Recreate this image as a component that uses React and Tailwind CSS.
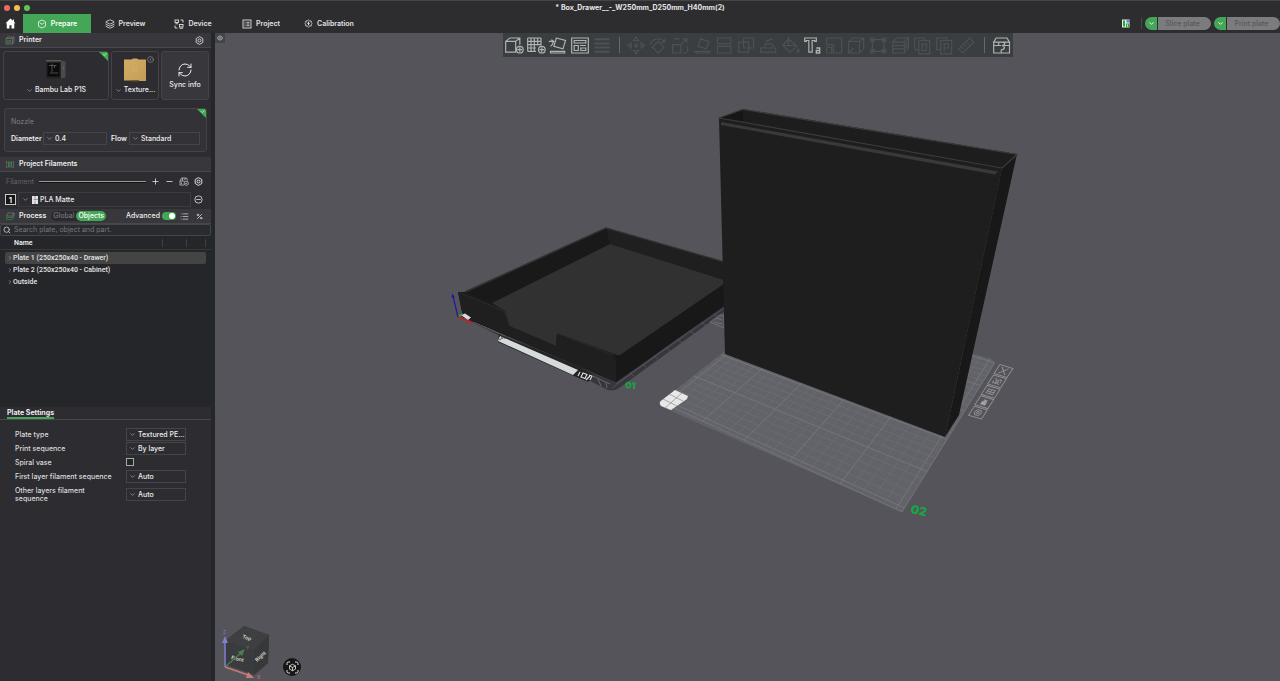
import React, { useState } from 'react';
import {
  ChevronDown,
  ChevronRight,
  Info,
  Layers,
  List,
  Minus,
  Percent,
  Plus,
  RefreshCw,
  Search,
} from 'lucide-react';

const TABS = ['Prepare', 'Preview', 'Device', 'Project', 'Calibration'];

const OBJECTS = [
  'Plate 1 (250x250x40 - Drawer)',
  'Plate 2 (250x250x40 - Cabinet)',
  'Outside',
];

/* ---------- small icons ---------- */

function HexNut({ size = 9 }) {
  return (
    <svg width={size} height={size} viewBox="0 0 18 18" fill="none" stroke="currentColor" strokeWidth="1.8">
      <path d="M9 1.2 15.6 5v8L9 16.8 2.4 13V5z" strokeLinejoin="round" />
      <circle cx="9" cy="9" r="3" />
    </svg>
  );
}

function TabIcon({ name }) {
  if (name === 'Prepare') {
    return (
      <svg width="10" height="10" viewBox="0 0 20 20" fill="none" stroke="currentColor" strokeWidth="1.5">
        <path d="M10 2 17 5.5v9L10 18l-7-3.500v-9z" strokeLinejoin="round" />
        <path d="M5.500 8 10 10.500 14.500 8" />
      </svg>
    );
  }
  if (name === 'Preview') return <Layers size={10} />;
  if (name === 'Device') {
    return (
      <svg width="10" height="10" viewBox="0 0 20 20" fill="none" stroke="currentColor" strokeWidth="1.8">
        <rect x="2" y="2" width="7" height="5" />
        <path d="M3 9.500h5M13 2h5v5M2 13v5h5" />
        <rect x="11" y="11" width="7" height="5" />
        <path d="M11 18.500h7" />
      </svg>
    );
  }
  if (name === 'Project') {
    return (
      <svg width="10" height="10" viewBox="0 0 20 20" fill="none" stroke="currentColor" strokeWidth="1.8">
        <rect x="2" y="2" width="16" height="16" />
        <path d="M5 6.500h2M9 6.500h6M5 10h2M9 10h6M5 13.500h2M9 13.500h6" />
      </svg>
    );
  }
  return (
    <svg width="9" height="9" viewBox="0 0 20 20" fill="none" stroke="currentColor" strokeWidth="1.8">
      <path d="M10 2 12.500 4.200 16 4.500 16 8 18 10 16 12 16 15.500 12.500 15.800 10 18 7.500 15.800 4 15.500 4 12 2 10 4 8 4 4.500 7.500 4.200z" />
      <path d="M10 6v8M7.500 10h5" strokeWidth="2.200" />
    </svg>
  );
}

function PrinterIcon() {
  return (
    <svg width="10" height="9" viewBox="0 0 20 18" fill="none" stroke="#77777b" strokeWidth="1.500">
      <path d="M2 5 6 2h12v10l-3 4H2zM2 5h13v11M15 5l3-3" />
      <path d="M5 9h7v4H5z" stroke="#37833f" fill="#2c5a33" />
    </svg>
  );
}

function SpoolIcon() {
  return (
    <svg width="10" height="9" viewBox="0 0 20 18" fill="none" stroke="#66666a" strokeWidth="1.500">
      <path d="M3 2v14M17 2v14M3 4h14M3 14h14" />
      <path d="M7 4v10M10 4v10M13 4v10" stroke="#37833f" strokeWidth="2" />
    </svg>
  );
}

function ProcessIcon() {
  return (
    <svg width="10" height="9" viewBox="0 0 20 18" fill="none" strokeWidth="1.500">
      <path d="M6 2h12l-3 6H3zM18 2v5l-3 5" stroke="#77777b" />
      <path d="M3 8v3h12l3-4M3 12v3h12l3-4" stroke="#37833f" />
    </svg>
  );
}

function SectionHeader({ icon, title, children }) {
  return (
    <div className="flex h-[15px] items-center border-b border-[#47474c] bg-[#37373c] px-1">
      <span className="flex w-[15px] pl-px">{icon}</span>
      <h2 className="font-semibold text-[#ececee]">{title}</h2>
      {children}
    </div>
  );
}

function PickList({ id, options, className, label }) {
  return (
    <span className={`flex h-[13px] min-w-0 items-center border border-[#44444a] pl-[2px] ${className}`}>
      <ChevronDown size={7} className="shrink-0 text-[#b5b5b9]" />
      <select
        id={id}
        aria-label={label}
        className="min-w-0 flex-1 appearance-none bg-transparent pl-[2px] leading-[11px] font-medium text-[#ececee] outline-none"
      >
        {options.map((o) => (
          <option key={o}>{o}</option>
        ))}
      </select>
    </span>
  );
}

function CornerTick() {
  return (
    <span className="absolute top-0 right-0">
      <svg width="9" height="9" viewBox="0 0 18 18">
        <path d="M0 0h18v18z" fill="#3fae52" />
        <path d="M8 4.500l2.500 2.500L15 2.500" fill="none" stroke="#e8ffe9" strokeWidth="1.500" />
      </svg>
    </span>
  );
}

/* ---------- top bars ---------- */

function TitleBar() {
  return (
    <div className="flex h-[14px] items-center border-t border-[#454548] px-1">
      <div className="flex flex-1 gap-1">
        <span className="h-[6px] w-[6px] rounded-full bg-[#ee6a5f]" />
        <span className="h-[6px] w-[6px] rounded-full bg-[#f5bd4f]" />
        <span className="h-[6px] w-[6px] rounded-full bg-[#5fc454]" />
      </div>
      <h1 className="font-bold text-[#e6e6e8]">* Box_Drawer__-_W250mm_D250mm_H40mm(2)</h1>
      <div className="flex-1" />
    </div>
  );
}

function SplitButton({ label }) {
  return (
    <div className="flex h-[13px] gap-px overflow-hidden rounded-full">
      <button aria-label={`${label} options`} className="flex w-3 items-center justify-center bg-[#43a757] text-white">
        <ChevronDown size={7} strokeWidth={3} />
      </button>
      <button className="w-[53px] bg-[#7c7c7f] pr-1 font-medium text-[#57575a]">{label}</button>
    </div>
  );
}

function NavBar() {
  const [tab, setTab] = useState('Prepare');
  return (
    <div className="flex h-[19px] items-stretch">
      <button aria-label="Home" className="flex w-[23px] items-center justify-center pr-[2px]">
        <svg width="11" height="11" viewBox="0 0 22 22" fill="#fff">
          <path d="M11 1 1 10.500h2.500V21h5.500v-6.500h4V21h5.500V10.500H21l-3-2.800V3h-2.500v2.300z" />
        </svg>
      </button>
      {TABS.map((t) => (
        <button
          key={t}
          onClick={() => setTab(t)}
          className={`flex w-[68px] items-center justify-center gap-1 font-semibold ${
            tab === t ? 'bg-[#43a757] text-white' : 'text-[#e2e2e4]'
          }`}
        >
          <TabIcon name={t} />
          {t}
        </button>
      ))}
      <div className="ml-auto flex items-center">
        <svg width="8" height="9" viewBox="0 0 16 18">
          <path d="M0 1h15v16H0z" fill="#d9f5dc" />
          <path d="M2 3h4v12H2zM8 9h6v7H8z" fill="#1faa3c" />
          <path d="M9 2h6v5H9z" fill="#8f6ad0" />
          <path d="M10 11h2v4h-2z" fill="#d9f5dc" />
        </svg>
        <span className="mr-[3px] ml-[11px] h-[11px] w-px bg-[#48484b]" />
        <div className="flex gap-[3px]">
          <SplitButton label="Slice plate" />
          <SplitButton label="Print plate" />
        </div>
      </div>
    </div>
  );
}

/* ---------- sidebar ---------- */

function PrinterCards() {
  return (
    <div className="flex gap-[2px] pt-[3px] pr-[2px] pl-[3px]">
      <button className="relative flex h-[49px] flex-1 flex-col items-center overflow-hidden rounded-[3px] border border-[#434348]">
        <CornerTick />
        <svg className="mt-[7px]" width="22" height="22" viewBox="0 0 44 44">
          <path d="M2 4h30v35H2z" fill="#242425" />
          <path d="M32 3l9 2v32l-9 2z" fill="#4a4a4b" />
          <path d="M2 2h30v3H2z" fill="#5b5b5c" />
          <path d="M5 8h24v27H5z" fill="#0b0b0c" />
          <path d="M8 13h15M14 9v17M19 12v6" stroke="#66676b" strokeWidth="1.500" />
          <path d="M10 28h16" stroke="#4c4c50" strokeWidth="2" />
          <circle cx="37" cy="18" r="1.500" fill="#777" />
        </svg>
        <span className="mt-[4px] flex items-center gap-[2px] font-medium text-[#ececee]">
          <ChevronDown size={7} className="text-[#b5b5b9]" />
          Bambu Lab P1S
        </span>
      </button>
      <button className="relative flex h-[49px] w-[48px] flex-col items-center rounded-[3px] border border-[#434348]">
        <Info size={7} className="absolute top-1 right-1 text-[#97979b]" />
        <svg className="mt-[6px]" width="22" height="24" viewBox="0 0 44 48">
          <defs>
            <linearGradient id="gold" x1="0" y1="0" x2="1" y2="1">
              <stop offset="0" stopColor="#d3ad66" />
              <stop offset="1" stopColor="#c39c55" />
            </linearGradient>
          </defs>
          <path d="M0 3h15l3-2h8l3 2h15v43H30l-2 1H14v-2H0z" fill="url(#gold)" />
          <path d="M14 45h16v2H14z" fill="#111" />
          <path d="M17 16h9v6h-9zM19 22v10M25 22v10M17 27h10" fill="none" stroke="#d3b06d" strokeWidth="1" />
        </svg>
        <span className="mt-[3px] flex items-center gap-[2px] font-medium text-[#ececee]">
          <ChevronDown size={7} className="text-[#b5b5b9]" />
          Texture...
        </span>
      </button>
      <button className="flex h-[49px] w-[48px] flex-col items-center rounded-[3px] border border-[#434348] bg-[#37373c] pt-[10px] text-[#ececee]">
        <RefreshCw size={16} strokeWidth={1.5} />
        <span className="mt-[2px] font-medium">Sync info</span>
      </button>
    </div>
  );
}

function NozzlePanel() {
  return (
    <div className="relative mx-1 mt-2 mb-[5px] overflow-hidden rounded-[3px] border border-[#434348] bg-[#333337] px-[6px] pt-[7px] pb-[6px]">
      <CornerTick />
      <p className="leading-[11px] text-[#7e7e83]">Nozzle</p>
      <div className="mt-[5px] flex items-center font-semibold text-[#ececee]">
        <label htmlFor="diameter" className="w-[32px]">Diameter</label>
        <PickList id="diameter" options={['0.4', '0.2', '0.6']} className="w-[64px]" />
        <label htmlFor="flow" className="w-[22px] pl-1">Flow</label>
        <PickList id="flow" options={['Standard', 'High flow']} className="flex-1" />
      </div>
    </div>
  );
}

function FilamentRows() {
  return (
    <div className="pb-[2px]">
      <div className="flex h-[19px] items-center pl-[6px] text-[#ececee]">
        <span className="w-[33px] text-[#626267]">Filament</span>
        <span className="h-[2px] flex-1 border-t border-[#9a9a94] bg-[#121214]" />
        <button aria-label="Add filament" className="ml-[2px] flex w-[14px] justify-center">
          <Plus size={9} />
        </button>
        <button aria-label="Remove filament" className="flex w-[14px] justify-center">
          <Minus size={9} />
        </button>
        <button aria-label="Sync AMS" className="flex w-[15px] justify-center">
          <svg width="10" height="9" viewBox="0 0 20 18" fill="none" stroke="#c4c4c8" strokeWidth="1.600">
            <path d="M2 8 5 2h10l2 5M2 8v8h8M2 8h9M7 2v5M12 2v4M5 11v3" />
            <circle cx="14.500" cy="12.500" r="4.200" />
            <path d="M12.500 12.500l1.500 1.500 2.500-3" />
          </svg>
        </button>
        <button aria-label="Filament settings" className="mr-[5px] flex w-[15px] justify-center">
          <HexNut />
        </button>
      </div>
      <div className="flex items-center pt-px pl-[5px]">
        <span className="flex h-[11px] w-[11px] items-center justify-center border border-[#c9c9cc] bg-[#161617] text-[8px] font-semibold text-white">
          1
        </span>
        <span className="ml-[2px] flex h-[15px] flex-1 items-center border border-[#3b3b40] pl-[3px]">
          <ChevronDown size={7} className="text-[#b5b5b9]" />
          <svg className="ml-[3px]" width="6" height="8" viewBox="0 0 12 16">
            <path d="M0 0h12v16H0z" fill="#e4e4e6" />
            <path d="M6 0v7M3 7h9M6 9v7" stroke="#55555a" strokeWidth="1" />
          </svg>
          <select
            aria-label="Filament 1"
            className="flex-1 appearance-none bg-transparent pl-[2px] font-medium text-[#ececee] outline-none"
          >
            <option>PLA Matte</option>
            <option>PLA Basic</option>
          </select>
        </span>
        <button aria-label="Edit filament" className="mr-[5px] flex w-[15px] justify-center text-[#cfcfd2]">
          <svg width="9" height="9" viewBox="0 0 16 16" fill="none" stroke="currentColor" strokeWidth="1.600">
            <circle cx="8" cy="8" r="6.500" />
            <path d="M4 8h8" />
          </svg>
        </button>
      </div>
    </div>
  );
}

function ProcessHeader() {
  const [scope, setScope] = useState('Objects');
  return (
    <SectionHeader icon={<ProcessIcon />} title="Process">
      <div className="ml-[5px] flex rounded-full bg-[#2b2b2f]">
        {['Global', 'Objects'].map((s) => (
          <button
            key={s}
            onClick={() => setScope(s)}
            className={`h-[10px] rounded-full px-[2px] leading-[10px] ${
              scope === s ? 'bg-[#43a757] font-medium text-white' : 'text-[#808085]'
            }`}
          >
            {s}
          </button>
        ))}
      </div>
      <label htmlFor="advanced" className="ml-auto font-medium text-[#ececee]">Advanced</label>
      <input
        id="advanced"
        type="checkbox"
        defaultChecked
        className="ml-[2px] flex h-2 w-[14px] appearance-none items-center justify-start rounded-full bg-[#5a5a5e] px-px before:h-[6px] before:w-[6px] before:rounded-full before:bg-white checked:justify-end checked:bg-[#43a757]"
      />
      <button aria-label="Parameter list" className="flex w-[17px] justify-center text-[#cfcfd2]">
        <List size={9} />
      </button>
      <button aria-label="Compare presets" className="mr-[2px] flex w-3 justify-center text-[#cfcfd2]">
        <Percent size={7} strokeWidth={3} />
      </button>
    </SectionHeader>
  );
}

function ObjectList() {
  const [selected, setSelected] = useState(OBJECTS[0]);
  return (
    <div className="min-h-[171px] bg-[#242629] font-['Roboto',sans-serif]">
      <table className="w-full table-fixed border-separate border-spacing-0 text-left">
        <thead>
          <tr className="h-[14px]">
            <th className="border-b border-[#35373a] pl-[14px] font-semibold text-[#ececee]">Name</th>
            <th className="w-6 border-b border-[#35373a]"><span className="block h-2 border-l border-[#3d3f43]" /></th>
            <th className="w-[19px] border-b border-[#35373a]"><span className="block h-2 border-l border-[#3d3f43]" /></th>
            <th className="w-[6px] border-b border-[#35373a]"><span className="block h-2 border-l border-[#3d3f43]" /></th>
          </tr>
        </thead>
        <tbody className="before:block before:h-[2px]">
          {OBJECTS.map((o) => (
            <tr key={o} className="h-3">
              <td colSpan={4} className="px-[5px]">
                <button
                  onClick={() => setSelected(o)}
                  className={`flex h-3 w-full items-center rounded-[2px] pl-[2px] font-medium text-[#e4e4e6] ${
                    selected === o ? 'bg-[#444445]' : ''
                  }`}
                >
                  <ChevronRight size={6} className="text-[#c5c5c8]" />
                  {o}
                </button>
              </td>
            </tr>
          ))}
        </tbody>
      </table>
    </div>
  );
}

function SettingRow({ id, label, children }) {
  return (
    <div className="flex min-h-[14px] items-center">
      <label htmlFor={id} className="w-[111px] pt-px pr-3 leading-[8px] font-medium text-[#dcdcdf]">{label}</label>
      {children}
    </div>
  );
}

function PlateSettings() {
  return (
    <section>
      <div className="flex border-b border-[#47474c] pl-[7px]">
        <h2 className="border-b-2 border-[#43a757] pt-px leading-[9px] font-bold text-[#ececee]">Plate Settings</h2>
      </div>
      <div className="flex flex-col pt-[7px] pl-[15px]">
        <SettingRow id="plate-type" label="Plate type">
          <PickList id="plate-type" options={['Textured PE...', 'Cool Plate']} className="w-[60px]" />
        </SettingRow>
        <SettingRow id="print-seq" label="Print sequence">
          <PickList id="print-seq" options={['By layer', 'By object']} className="w-[60px]" />
        </SettingRow>
        <SettingRow id="spiral" label="Spiral vase">
          <input
            id="spiral"
            type="checkbox"
            className="h-2 w-2 appearance-none border border-[#a9a9ad] bg-[#242528] checked:bg-[#43a757]"
          />
        </SettingRow>
        <SettingRow id="first-layer" label="First layer filament sequence">
          <PickList id="first-layer" options={['Auto', 'Customize']} className="w-[60px]" />
        </SettingRow>
        <div className="pt-[3px]">
          <SettingRow id="other-layers" label="Other layers filament sequence">
            <PickList id="other-layers" options={['Auto', 'Customize']} className="w-[60px]" />
          </SettingRow>
        </div>
      </div>
    </section>
  );
}

function Sidebar() {
  return (
    <aside className="w-[215px] shrink-0 border-r-4 border-[#24282b] bg-[#2d2d31]">
      <SectionHeader icon={<PrinterIcon />} title="Printer">
        <button aria-label="Printer settings" className="mr-[3px] ml-auto text-[#d5d5d8]">
          <HexNut />
        </button>
      </SectionHeader>
      <PrinterCards />
      <NozzlePanel />
      <SectionHeader icon={<SpoolIcon />} title="Project Filaments" />
      <FilamentRows />
      <ProcessHeader />
      <label className="flex h-3 items-center gap-[3px] rounded-[2px] border border-[#46464a] bg-[#2a2b2e] pl-[2px] text-[#c9c9cc]">
        <Search size={8} strokeWidth={2.5} />
        <input
          type="search"
          aria-label="Search"
          placeholder="Search plate, object and part."
          className="min-w-0 flex-1 bg-transparent outline-none placeholder:text-[#77777c]"
        />
      </label>
      <ObjectList />
      <PlateSettings />
    </aside>
  );
}

/* ---------- 3D view ---------- */

// Maps the unit square onto a plate seen in perspective.
// Corners run front-left, front-right, back-right, back-left.
function project([[x0, y0], [x1, y1], [x2, y2], [x3, y3]]) {
  const dx1 = x1 - x2;
  const dx2 = x3 - x2;
  const sx = x0 - x1 + x2 - x3;
  const dy1 = y1 - y2;
  const dy2 = y3 - y2;
  const sy = y0 - y1 + y2 - y3;
  const det = dx1 * dy2 - dx2 * dy1;
  const g = (sx * dy2 - dx2 * sy) / det;
  const h = (dx1 * sy - sx * dy1) / det;
  return (u, v) => {
    const w = g * u + h * v + 1;
    return [
      ((x1 - x0 + g * x1) * u + (x3 - x0 + h * x3) * v + x0) / w,
      ((y1 - y0 + g * y1) * u + (y3 - y0 + h * y3) * v + y0) / w,
    ];
  };
}

const plate = project([[661, 402], [902, 512], [995, 360], [790, 300]]);

function PlateGrid() {
  const lines = [];
  for (let i = 0; i <= 25; i++) {
    const t = 0.02 + (i * 0.96) / 25;
    lines.push({ key: `u${i}`, major: i % 5 === 0, a: plate(t, 0), b: plate(t, 1) });
    lines.push({ key: `v${i}`, major: i % 5 === 0, a: plate(0, t), b: plate(1, t) });
  }
  return lines.map((l) => (
    <line
      key={l.key}
      x1={l.a[0]}
      y1={l.a[1]}
      x2={l.b[0]}
      y2={l.b[1]}
      stroke={l.major ? '#797a7f' : '#6e6f74'}
      strokeWidth={l.major ? 0.8 : 0.6}
    />
  ));
}

function PlateActions() {
  const glyphs = [
    'M-3 -3L3 3M3 -3L-3 3',
    'M-3 -2h2M-3 0v2h3M1 -2h2v3M-1 2h4M-1 -1h2v2h-2z',
    'M-3 -2h6v4h-6zM-3 0h6M0 -2v4',
    'M-2 0h4v2.500h-4zM-1 0v-2h2.500v2',
    'M-3 0L-1.500 -2.500h3L3 0L1.500 2.500h-3zM-1 0a1 1 0 1 0 2 0a1 1 0 1 0 -2 0',
  ];
  return glyphs.map((d, i) => (
    <g
      key={d}
      transform={`matrix(1.080 0.320 -0.650 1 ${1003.5 - i * 6.4} ${371 + i * 10.400})`}
      fill={i === 3 ? '#a9a9ac' : 'none'}
      stroke="#929296"
      strokeWidth="0.8"
    >
      <rect x="-6" y="-4.500" width="12" height="9" fill="none" />
      <path d={d} />
    </g>
  ));
}

function Scene() {
  return (
    <svg
      className="absolute inset-0 h-full w-full"
      viewBox="215 33 1065 648"
      preserveAspectRatio="xMidYMid slice"
      role="img"
      aria-label="Build plates"
    >
      {/* plate 1 */}
      <path d="M460 316L604 388Q612 393 619 388L724 312V300L616 376L466 312z" fill="#37363c" />
      <path d="M616 384L724 308M612 388L724 305M628 371l6 5M640 362l6 5M652 354l6 5M664 346l6 5M676 338l6 5M688 329l6 5M700 321l6 5M712 312l6 5" stroke="#5a595f" strokeWidth="0.7" fill="none" />
      <path d="M474 322L610 384M598 379l3 7M606 382l1 6" stroke="#66656b" strokeWidth="1" fill="none" />
      <path d="M710 322l10-7 4 1v12zM714 322l8 2M716 318l6 2" fill="none" stroke="#77777c" strokeWidth="0.8" />
      <path d="M499 334L580 367L594 375L588 382L574 376L498 342z" fill="#242427" />
      <path d="M500 336L578 370L573 375L498 341z" fill="#d7dadb" />
      <path d="M499 340l8-4M501 335l1 3M504 336l1 3" stroke="#3a3a3d" strokeWidth="0.8" />
      <path d="M580 372l-2 4M583 373l4 1.500-2 4-4-1.500zM589 375l3 1-2 4M586 380l4-4" fill="none" stroke="#e4e4e4" strokeWidth="1.100" />

      {/* drawer */}
      <path d="M458 292L467 292L606 228L724 262V306L616 382L463 317z" fill="#1b1b1b" />
      <path d="M467 292L606 229L610 244L492 303z" fill="#191919" />
      <path d="M606 229L724 263V280L610 244z" fill="#1f1f1f" />
      <path d="M610 244L724 280V284L620 356L557 333L556 346L509 326L505 311L492 303z" fill="#313131" />
      <path d="M615 356L620 355L724 284V306L616 382z" fill="#181818" />
      <path d="M458 292L502 310Q506 312 507 318L509 326L556 346L557 333L612 355Q616 357 616 361V382L463 317z" fill="#1f1f1f" />
      <path d="M465 292L606 228L724 262" fill="none" stroke="#303031" strokeWidth="1.500" />
      <path d="M458 292L502 310Q506 312 507 318M557 333L613 355" fill="none" stroke="#303031" strokeWidth="0.8" />

      {/* origin axes */}
      <path d="M461 315l4-1.500 6 4-3 2.500z" fill="#d9d9d9" />
      <path d="M458 317L453 296" stroke="#1b1ba0" strokeWidth="1.200" />
      <path d="M451.500 298L452 293.500L455 297z" fill="#1b1ba0" />
      <path d="M458 317L473 323" stroke="#c81e1e" strokeWidth="1.500" />
      <path d="M459 316L463 314" stroke="#27b03a" strokeWidth="1.500" />

      {/* plate 2 */}
      <path d="M665 398L790 300L991 359Q996 361 994 365L902 512L664 408Q657 404 665 398z" fill="#626369" />
      <PlateGrid />
      <path d="M661 402L902 512L995 362" fill="none" stroke="#77787d" strokeWidth="0.8" />
      <path d="M675 390L688 396L687 399L671 410L661 406Q658 402 662 400z" fill="#e8e8e8" />
      <path d="M669 394L683 401M663 399L677 406M682 393L665 408" stroke="#8b8b8e" strokeWidth="0.7" />
      <PlateActions />

      {/* cabinet */}
      <path d="M719 118L743 109L1017 154L1002 168z" fill="#1d1d1d" />
      <path d="M719 118L743 109L743 121z" fill="#161616" />
      <path d="M719 118L1002 168L945 437L725 354z" fill="#1e1e1e" />
      <path d="M1002 168L1017 154L959 415L945 437z" fill="#181818" />
      <path d="M721 122L998 171.500L995 174.500L721 125z" fill="#393939" />
      <path d="M719 118L743 109.500L1017 154.500L1002 168z" fill="none" stroke="#3a3a3b" strokeWidth="1.200" strokeLinejoin="round" />

      <g fill="#17a443" fontFamily="Inter, sans-serif" fontWeight="900">
        <text x="625" y="388" fontSize="9" transform="rotate(6 625 388)">01</text>
        <text x="910" y="513" fontSize="12" transform="rotate(12 910 513)">02</text>
      </g>
    </svg>
  );
}

const ADD_TOOLS = [
  { name: 'Add', d: 'M2 6 7 2h12v8M2 6h12v13H2zM14 6l5-4M19 13v6M16 16h6', ring: true },
  { name: 'Add plate', d: 'M2 2h16M2 6h16M2 10h16M2 14h10M2 18h10M2 2v16M6 2v16M10 2v16M14 2v9M18 2v9M19 13v6M16 16h6', ring: true },
  { name: 'Auto orient', d: 'M10 2l11 3-3 10-11-3zM1 6h6M4 4l3 2-2 3M6 9l-3 3M3 18h17v2H3z' },
  { name: 'Arrange', d: 'M2 2h20v18H2zM5 5h14v3H5zM5 11h5v6H5zM12 11h7M13 14h6v3h-6z' },
];

const EDIT_TOOLS = [
  { name: 'Move', d: 'M11 1l3 4H8zM11 21l3-4H8zM1 11l4-3v6zM21 11l-4-3v6zM11 9l2 2-2 2-2-2z' },
  { name: 'Rotate', d: 'M11 6l7 7-7 7-7-7zM2 10C3 3 14 0 19 7M19 3v4h-4' },
  { name: 'Scale', d: 'M2 10h10v10H2zM12 10l7-7M14 3h5v5M4 3h6M20 12v7M15 20h4' },
  { name: 'Lay on face', d: 'M9 3l10 3-3 9-10-3zM2 18h18v2H4z' },
  { name: 'Cut', d: 'M3 2h16v7H3zM3 12h16v8H3z' },
  { name: 'Boolean', d: 'M2 7h12v12H2zM8 2h12v12H8z' },
  { name: 'Support paint', d: 'M2 14h18v5H2zM6 14l2-5h6l4 3M8 6l8-3' },
  { name: 'Color paint', d: 'M9 3l10 9-8 7-9-8zM9 1v9M2 11h16M21 15c3 5-4 6-1 1z' },
  { name: 'Text', text: true, d: 'M2 2h14v4h-2V5h-3v14H7V5H4v1H2z' },
  { name: 'Seam', d: 'M2 2h18v18H10V10H2zM2 13h6v7H2z' },
  { name: 'Mesh', d: 'M2 6 7 2h13v13l-5 5H2zM2 6h13v14M15 6l5-4M2 20l6-6' },
  { name: 'Simplify', d: 'M4 4h14v14H4zM2 2h4v4H2zM16 2h4v4h-4zM2 16h4v4H2zM16 16h4v4h-4z' },
  { name: 'Layers', d: 'M2 7 7 2h14v12l-5 6H2zM2 7h14v13M16 7l5-5M2 11h14l5-5M2 15h14l5-5' },
  { name: 'Split to objects', d: 'M7 16H2V2h12v3M7 5h13v16H7zM11 9h5v8h-5z' },
  { name: 'Split to parts', d: 'M7 16H2V2h12v3M7 5h13v16H7zM11 18V9h5v5h-5' },
  { name: 'Measure', d: 'M2 15 15 2l5 5L7 20zM6 13l2 2M9 10l2 2M12 7l2 2' },
];

function Tool({ tool, active }) {
  return (
    <button
      aria-label={tool.name}
      className={`flex h-6 w-[22px] items-center justify-center ${active ? 'text-[#b0b3b1]' : 'text-[#4e5154]'}`}
    >
      <svg width="20" height="19" viewBox="0 0 24 22" fill="none" stroke="currentColor" strokeWidth="1.4">
        <path d={tool.d} />
        {tool.ring && <circle cx="19" cy="16" r="4" />}
        {tool.text && <path d="M16 14h4v6h-4v-3h4" strokeWidth="1.600" />}
      </svg>
    </button>
  );
}

function Toolbar() {
  return (
    <div className="absolute inset-x-0 top-0 flex justify-center pl-5">
      <div className="flex h-6 items-center bg-[#3a3e40]">
        {ADD_TOOLS.map((t) => (
          <Tool key={t.name} tool={t} active />
        ))}
        <Tool tool={{ name: 'Variable layer height', d: 'M3 3h18M3 4h18M3 8h18M3 9h18M3 13h18M3 14h18M3 18h18M3 19h18' }} />
        <span className="mx-[6px] h-4 w-px bg-[#67696b]" />
        {EDIT_TOOLS.map((t) => (
          <Tool key={t.name} tool={t} active={t.text} />
        ))}
        <span className="mx-[6px] h-4 w-px bg-[#67696b]" />
        <Tool
          active
          tool={{ name: 'Assembly view', d: 'M5 2h13l3 5H2zM2 7h19v13H2zM2 11h6M15 11h6M8 7v4h3M12 7c5 0 4 4 0 4 4 1 4 5-1 5M11 16v4' }}
        />
      </div>
    </div>
  );
}

function NavCube() {
  return (
    <div className="absolute bottom-0 left-1 flex items-end">
      <svg width="56" height="58" viewBox="219 623 56 58">
        <path d="M244 626L269 635L268 663L254 675L226 665L225 641z" fill="#3a3b3c" />
        <path d="M244 626L269 635L254 650L225 641z" fill="#3e3f40" />
        <path d="M269 635L268 663L254 675V650z" fill="#373839" />
        <g fill="#dcdcdc" fontFamily="Inter, sans-serif" fontSize="5" fontWeight="600">
          <text x="242" y="638" transform="rotate(18 242 638)">Top</text>
          <text x="231" y="659" transform="rotate(14 231 659)">Front</text>
          <text x="257" y="662" transform="rotate(-42 257 662)">Right</text>
        </g>
        <path d="M225 667L242 652" stroke="#4a8050" strokeWidth="1.300" />
        <path d="M245 649L238 652L242 656z" fill="#4a8050" />
        <path d="M225 667V642" stroke="#7d7dd0" strokeWidth="1.500" />
        <path d="M225 636L228 643H222z" fill="#8080d2" />
        <path d="M225 667L248 675" stroke="#c87878" strokeWidth="1.500" />
        <path d="M254 678L248 672L246 678z" fill="#cf7a7a" />
        <g fontFamily="Inter, sans-serif" fontSize="5">
          <text x="223" y="634" fill="#7d7dd0">Z</text>
          <text x="246" y="650" fill="#4a8050">Y</text>
          <text x="257" y="679" fill="#cf7a7a">X</text>
        </g>
      </svg>
      <button aria-label="Fit view" className="mb-[5px] ml-2 flex h-[18px] w-[18px] items-center justify-center rounded-full bg-[#161617] text-[#ececee]">
        <svg width="13" height="13" viewBox="0 0 26 26" fill="none" stroke="currentColor" strokeWidth="2">
          <path d="M2 8V5q0-3 3-3h3M18 2h3q3 0 3 3v3M24 18v3q0 3-3 3h-3M8 24H5q-3 0-3-3v-3" />
          <path d="M13 6.500l6 3.200v6.600l-6 3.200-6-3.200V9.700zM7 9.700l6 3.300 6-3.300M13 13v6.500" strokeWidth="1.600" />
        </svg>
      </button>
    </div>
  );
}

function Viewport() {
  return (
    <main className="relative min-w-0 flex-1 overflow-hidden bg-[#55545a]">
      <Scene />
      <button aria-label="Collapse sidebar" className="absolute top-0 left-0 flex h-[10px] w-[10px] items-center justify-center bg-[#414547] text-[#a5a7a9]">
        <svg width="8" height="6" viewBox="0 0 16 12" fill="none" stroke="currentColor" strokeWidth="1.500">
          <path d="M6 2 2 6l4 4zM10 2l4 4-4 4zM8 0v12" />
        </svg>
      </button>
      <Toolbar />
      <NavCube />
    </main>
  );
}

export default function App() {
  return (
    <div className="flex min-h-screen flex-col bg-[#2d2d2f] font-['Inter',sans-serif] text-[7px] leading-[10px] [font-feature-settings:'calt'_0]">
      <TitleBar />
      <NavBar />
      <div className="flex flex-1">
        <Sidebar />
        <Viewport />
      </div>
    </div>
  );
}
